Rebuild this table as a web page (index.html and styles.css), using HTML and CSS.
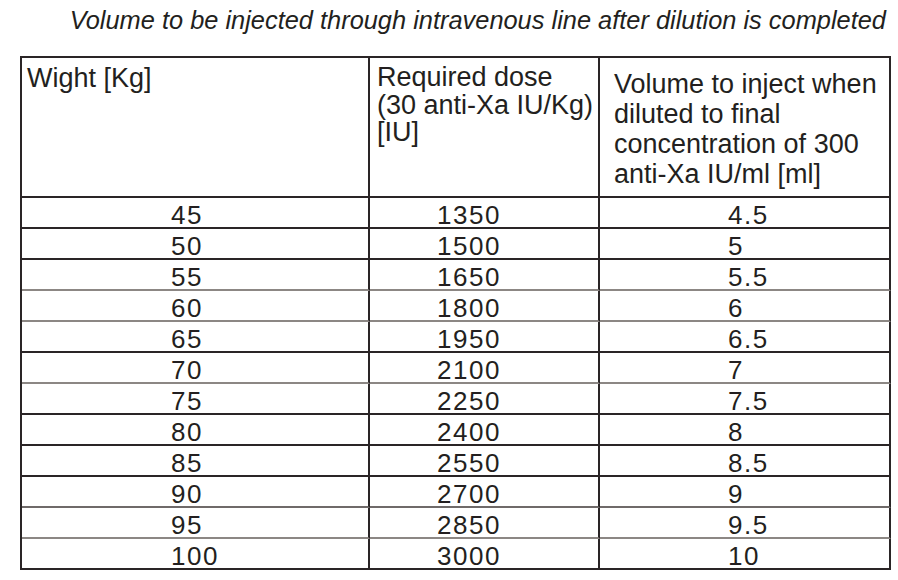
FILE: index.html
```html
<!DOCTYPE html>
<html>
<head>
<meta charset="utf-8">
<link rel="stylesheet" href="styles.css">
</head>
<body>
<div class="page">
  <div class="title">Volume to be injected through intravenous line after dilution is completed</div>
  <table class="dose">
    <colgroup>
      <col class="c1"><col class="c2"><col class="c3">
    </colgroup>
    <thead>
      <tr>
        <th class="h1">Wight [Kg]</th>
        <th class="h2">Required dose<br>(30 anti-Xa IU/Kg)<br>[IU]</th>
        <th class="h3">Volume to inject when<br>diluted to final<br>concentration of 300<br>anti-Xa IU/ml [ml]</th>
      </tr>
    </thead>
    <tbody>
      <tr class="dk"><td>45</td><td>1350</td><td>4.5</td></tr>
      <tr class="dk"><td>50</td><td>1500</td><td>5</td></tr>
      <tr class="gr"><td>55</td><td>1650</td><td>5.5</td></tr>
      <tr class="gr"><td>60</td><td>1800</td><td>6</td></tr>
      <tr class="dk"><td>65</td><td>1950</td><td>6.5</td></tr>
      <tr class="gr"><td>70</td><td>2100</td><td>7</td></tr>
      <tr class="dk"><td>75</td><td>2250</td><td>7.5</td></tr>
      <tr class="dk"><td>80</td><td>2400</td><td>8</td></tr>
      <tr class="dk"><td>85</td><td>2550</td><td>8.5</td></tr>
      <tr class="lt"><td>90</td><td>2700</td><td>9</td></tr>
      <tr class="gr"><td>95</td><td>2850</td><td>9.5</td></tr>
      <tr class="dk"><td>100</td><td>3000</td><td>10</td></tr>
    </tbody>
  </table>
</div>
</body>
</html>
```
FILE: styles.css
```css
html, body {
  margin: 0;
  padding: 0;
  background: #ffffff;
}
body {
  font-family: "Liberation Sans", Arial, sans-serif;
  color: #231f20;
}
.page {
  width: 898px;
  padding-left: 20px;
  box-sizing: border-box;
}
.title {
  width: 867px;
  height: 56px;
  box-sizing: border-box;
  padding-top: 5px;
  padding-right: 1px;
  text-align: right;
  font-style: italic;
  font-size: 25.4px;
  line-height: 30px;
}
.dose {
  border-collapse: separate;
  border-spacing: 0;
  border-top: 2px solid #2a2526;
  border-left: 2px solid #2a2526;
  table-layout: fixed;
  width: 869px;
}
.c1 { width: 348px; }
.c2 { width: 230px; }
.c3 { width: 291px; }
.dose th, .dose td {
  border-right: 2px solid #2a2526;
  border-bottom: 2px solid #2a2526;
  padding: 0;
  text-align: left;
  font-weight: normal;
  vertical-align: top;
}
.dose th {
  height: 140px;
  box-sizing: border-box;
  font-size: 27px;
}
.h1 {
  padding: 7px 0 0 5px !important;
  line-height: 27px;
}
.h2 {
  padding: 6px 0 0 7px !important;
  line-height: 27.5px;
}
.h3 {
  padding: 11px 0 0 14px !important;
  line-height: 30px;
}
.dose td {
  font-size: 26px;
  letter-spacing: 1.5px;
  line-height: 24px;
  padding-top: 5px;
}
.dose td:nth-child(1) { padding-left: 149px; }
.dose td:nth-child(2) { padding-left: 67px; }
.dose td:nth-child(3) { padding-left: 128px; }
.dose tr.gr td { border-bottom-color: #8c8784; }
.dose tr.lt td { border-bottom-color: #6f6a69; }
```
